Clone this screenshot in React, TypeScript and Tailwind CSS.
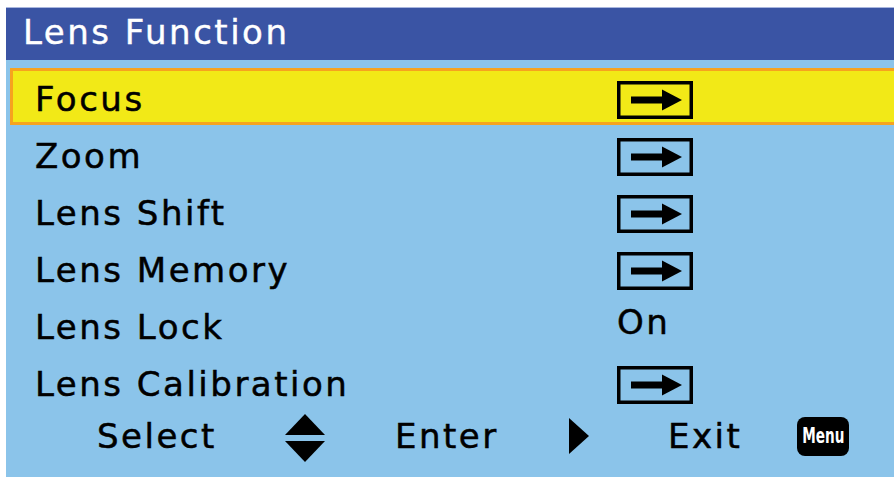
import React from "react";

const font = { fontFamily: '"DejaVu Sans", Verdana, sans-serif' };

function ArrowBox() {
  return (
    <svg width="76" height="38" viewBox="0 0 76 38" className="block">
      <rect x="1.75" y="1.75" width="72.5" height="34.5" fill="none" stroke="#000" strokeWidth="3.5" />
      <rect x="14" y="15.5" width="34" height="7" fill="#000" />
      <polygon points="45,8.5 65,19 45,29.5" fill="#000" />
    </svg>
  );
}

const rows: { label: string; value: "arrow" | "On" }[] = [
  { label: "Focus", value: "arrow" },
  { label: "Zoom", value: "arrow" },
  { label: "Lens Shift", value: "arrow" },
  { label: "Lens Memory", value: "arrow" },
  { label: "Lens Lock", value: "On" },
  { label: "Lens Calibration", value: "arrow" },
];

export default function App() {
  return (
    <div className="w-[894px] h-[477px] bg-white pl-[6px] pt-[7px] overflow-hidden" style={font}>
      <div className="flex flex-col h-full border-t border-[#a9b6de]">
        <div className="h-[52px] bg-[#3a54a4] flex items-center pl-[17px] pb-[4px] text-white text-[34px] tracking-[2.5px] leading-none [-webkit-text-stroke-width:0.4px]">
          Lens Function
        </div>
        <div className="flex-1 bg-[#8bc4ea] flex flex-col pt-[8px] pl-[4px]">
          {rows.map((r, i) => (
            <div
              key={r.label}
              className={
                "h-[57px] flex items-center pt-[6px] text-black text-[34px] tracking-[2.5px] leading-none [-webkit-text-stroke-width:0.5px] " +
                (i === 0
                  ? "bg-[#f2e917] border-y-[3px] border-l-[3px] border-[#f6a31f] pl-[22px]"
                  : "pl-[25px]")
              }
            >
              <div className="w-[582px] -mt-[2px]">{r.label}</div>
              {r.value === "arrow" ? (
                <ArrowBox />
              ) : (
                <div className="-mt-[12px]">On</div>
              )}
            </div>
          ))}
          <div className="h-[56px] flex items-center pb-[4px] text-black text-[34px] tracking-[2.5px] leading-none [-webkit-text-stroke-width:0.5px] pl-[87px]">
            <div className="w-[188px]">Select</div>
            <svg width="40" height="48" viewBox="0 0 40 48" className="block mt-[4px]">
              <polygon points="20,0 40,21 0,21" fill="#000" />
              <polygon points="0,27 40,27 20,48" fill="#000" />
            </svg>
            <div className="ml-[70px] w-[174px]">Enter</div>
            <svg width="20" height="36" viewBox="0 0 20 36" className="block">
              <polygon points="0,0 20,18 0,36" fill="#000" />
            </svg>
            <div className="ml-[79px] w-[129px]">Exit</div>
            <div
              className="w-[52px] h-[39px] bg-black rounded-[8px] flex items-center justify-center text-white text-[21px] font-bold tracking-[0px] [-webkit-text-stroke-width:0px]"
              style={{ fontFamily: '"DejaVu Sans Condensed", "DejaVu Sans", sans-serif' }}
            >
              <span className="inline-block scale-x-[0.72]">Menu</span>
            </div>
          </div>
        </div>
      </div>
    </div>
  );
}
